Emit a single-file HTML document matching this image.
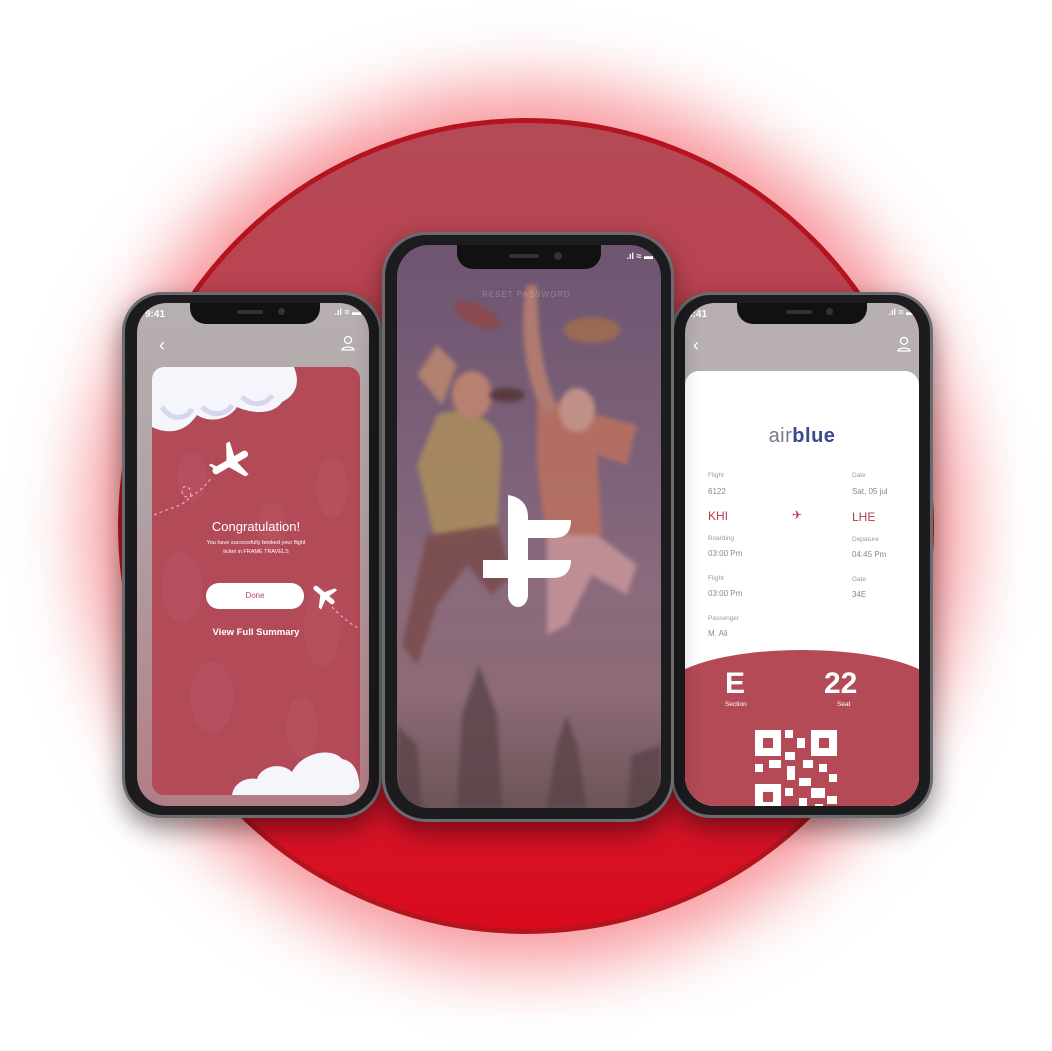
<!DOCTYPE html>
<html><head><meta charset="utf-8"><style>
*{margin:0;padding:0;box-sizing:border-box}
body{width:1052px;height:1051px;background:#fff;position:relative;overflow:hidden;font-family:"Liberation Sans",sans-serif}
.a{position:absolute}
.circle{left:118px;top:118px;width:816px;height:816px;border-radius:50%;background:linear-gradient(180deg,#b44a56 0%,#c23a4a 45%,#d4192c 80%,#d90a1e 100%);border:5px solid #b5141f;box-shadow:0 0 70px 30px rgba(240,40,50,.5)}
.phone{background:#1c1c1e;border-radius:40px;border:3px solid #6a6c70;box-shadow:0 10px 25px rgba(0,0,0,.45)}
.scr{border-radius:30px;overflow:hidden}
.notch{background:#111;border-radius:0 0 16px 16px}
.st{color:#fff;font-size:10px;font-weight:bold}
</style></head><body>
<div class="a circle"></div>

<!-- LEFT PHONE -->
<div class="a phone" style="left:122px;top:292px;width:260px;height:526px"></div>
<div class="a scr" style="left:137px;top:303px;width:232px;height:503px;background:linear-gradient(180deg,#b6afb0 0%,#b0a2a5 40%,#b27e86 100%)">
  <div class="a st" style="left:8px;top:6px">9:41</div>
  <div class="a st" style="right:8px;top:4px;font-size:9px">.ıl ≈ ▬</div>
  <div class="a" style="left:22px;top:32px;color:#fff;font-size:18px">‹</div>
  <svg class="a" style="left:203px;top:32px" width="16" height="16" viewBox="0 0 16 16"><circle cx="8" cy="5" r="3.5" fill="none" stroke="#fff" stroke-width="1.3"/><path d="M2 15c0-4 12-4 12 0z" fill="none" stroke="#fff" stroke-width="1.3"/></svg>
  <div class="a" style="left:15px;top:64px;width:208px;height:428px;border-radius:12px;background:#b24a58;overflow:hidden">
    <svg class="a" style="left:0;top:0" width="208" height="428">
      <g fill="#bb5663" opacity=".5"><ellipse cx="180" cy="120" rx="16" ry="30"/><ellipse cx="30" cy="220" rx="20" ry="35"/><ellipse cx="170" cy="260" rx="18" ry="40"/><ellipse cx="60" cy="330" rx="22" ry="35"/><ellipse cx="150" cy="360" rx="16" ry="30"/><ellipse cx="120" cy="160" rx="14" ry="25"/><ellipse cx="40" cy="110" rx="15" ry="25"/></g>
      <path d="M0 0H142C150 20 140 30 130 35C120 50 95 45 85 40C75 55 55 55 45 48C30 70 10 65 0 60Z" fill="#f5f5fc"/>
      <path d="M10 40C20 55 35 52 40 42 M50 40C60 50 75 48 80 38 M90 30C100 40 115 38 120 28" stroke="#d6d6ee" stroke-width="5" fill="none"/>
      <path d="M80 428C82 415 95 410 105 412C110 398 130 395 140 405C150 385 180 380 190 392C205 395 208 410 208 428Z" fill="#f5f5fc"/>
      <g fill="#fff" transform="translate(78,95) rotate(-30)"><rect x="-20" y="-3" width="40" height="7" rx="3.5"/><path d="M-4 0L6 -18L10 -18L6 0Z M-4 3L6 20L10 20L6 3Z M-16 0L-20 -8L-17 -8L-12 0Z"/></g>
      <path d="M2 148C20 140 30 140 38 130C42 120 30 115 30 125C32 135 45 130 60 110" stroke="#e8c0c6" stroke-width="1" stroke-dasharray="3 3" fill="none"/>
      <g fill="#fff" transform="translate(172,228) rotate(40)"><rect x="-13" y="-2.5" width="26" height="5" rx="2.5"/><path d="M-3 0L4 -12L7 -12L4 0Z M-3 2L4 13L7 13L4 2Z"/></g>
      <path d="M180 240C190 250 195 255 208 262" stroke="#e8c0c6" stroke-width="1" stroke-dasharray="3 3" fill="none"/>
    </svg>
    <div class="a" style="left:0;width:208px;top:152px;text-align:center;color:#fff;font-size:13px">Congratulation!</div>
    <div class="a" style="left:0;width:208px;top:172px;text-align:center;color:#fff;font-size:5.5px;line-height:9px">You have successfully booked your flight<br>ticket in FRAME TRAVELS</div>
    <div class="a" style="left:54px;top:216px;width:98px;height:26px;border-radius:13px;background:#fff;color:#b24a58;font-size:8px;text-align:center;line-height:26px">Done</div>
    <div class="a" style="left:0;width:208px;top:260px;text-align:center;color:#fff;font-size:9.5px;font-weight:bold">View Full Summary</div>
  </div>
  <div class="a notch" style="left:53px;top:0;width:130px;height:21px"></div>
  <div class="a" style="left:100px;top:7px;width:26px;height:4px;border-radius:2px;background:#333"></div>
  <div class="a" style="left:141px;top:5px;width:7px;height:7px;border-radius:50%;background:#333"></div>
</div>

<!-- RIGHT PHONE -->
<div class="a phone" style="left:671px;top:292px;width:262px;height:526px"></div>
<div class="a scr" style="left:685px;top:303px;width:234px;height:503px;background:#b7afb0">
  <div class="a st" style="left:2px;top:6px">9:41</div>
  <div class="a st" style="right:4px;top:4px;font-size:9px">.ıl ≈ ▬</div>
  <div class="a" style="left:8px;top:32px;color:#fff;font-size:18px">‹</div>
  <svg class="a" style="left:211px;top:33px" width="16" height="16" viewBox="0 0 16 16"><circle cx="8" cy="5" r="3.5" fill="none" stroke="#fff" stroke-width="1.3"/><path d="M2 15c0-4 12-4 12 0z" fill="none" stroke="#fff" stroke-width="1.3"/></svg>
  <div class="a" style="left:0;top:68px;width:234px;height:440px;background:#fff;border-radius:14px 14px 0 0"></div>
  <div class="a" style="left:0;top:122px;width:234px;text-align:center;font-size:20px;letter-spacing:.5px"><span style="color:#777a88">air</span><b style="color:#3b4a8c">blue</b></div>
  <div style="position:absolute;left:23px;top:169px;font-size:6.5px;color:#999">Flight</div>
  <div style="position:absolute;left:23px;top:184px;font-size:8px;color:#888">6122</div>
  <div style="position:absolute;left:167px;top:169px;font-size:6.5px;color:#999">Date</div>
  <div style="position:absolute;left:167px;top:184px;font-size:8px;color:#888">Sat, 05 jul</div>
  <div style="position:absolute;left:23px;top:206px;font-size:12px;color:#b43c4c">KHI</div>
  <div style="position:absolute;left:107px;top:205px;font-size:12px;color:#b43c4c">✈</div>
  <div style="position:absolute;left:167px;top:207px;font-size:12px;color:#b43c4c">LHE</div>
  <div style="position:absolute;left:23px;top:232px;font-size:6.5px;color:#999">Boarding</div>
  <div style="position:absolute;left:23px;top:246px;font-size:8px;color:#888">03:00 Pm</div>
  <div style="position:absolute;left:167px;top:233px;font-size:6.5px;color:#999">Depature</div>
  <div style="position:absolute;left:167px;top:247px;font-size:8px;color:#888">04:45 Pm</div>
  <div style="position:absolute;left:23px;top:272px;font-size:6.5px;color:#999">Flight</div>
  <div style="position:absolute;left:23px;top:286px;font-size:8px;color:#888">03:00 Pm</div>
  <div style="position:absolute;left:167px;top:273px;font-size:6.5px;color:#999">Gate</div>
  <div style="position:absolute;left:167px;top:287px;font-size:8px;color:#888">34E</div>
  <div style="position:absolute;left:23px;top:312px;font-size:6.5px;color:#999">Passenger</div>
  <div style="position:absolute;left:23px;top:326px;font-size:8px;color:#888">M. Ali</div>
  <div class="a" style="left:-20px;top:347px;width:274px;height:200px;border-radius:50% 50% 0 0/40px 40px 0 0;background:#b34a56"></div>
  <div class="a" style="left:40px;top:364px;color:#fff;font-size:30px;font-weight:bold">E</div>
  <div class="a" style="left:40px;top:398px;color:#fff;font-size:6.5px">Section</div>
  <div class="a" style="left:139px;top:364px;color:#fff;font-size:30px;font-weight:bold">22</div>
  <div class="a" style="left:152px;top:398px;color:#fff;font-size:6.5px">Seat</div>
  <svg class="a" style="left:70px;top:427px" width="82" height="80" viewBox="0 0 82 80"><g fill="#fff"><path d="M0 0h26v26H0zM8 8v10h10V8z" fill-rule="evenodd"/><path d="M56 0h26v26H56zM64 8v10h10V8z" fill-rule="evenodd"/><path d="M0 54h26v26H0zM8 62v10h10V62z" fill-rule="evenodd"/><rect x="30" y="0" width="8" height="8"/><rect x="42" y="8" width="8" height="10"/><rect x="30" y="22" width="10" height="8"/><rect x="0" y="34" width="8" height="8"/><rect x="14" y="30" width="12" height="8"/><rect x="32" y="36" width="8" height="14"/><rect x="48" y="30" width="10" height="8"/><rect x="64" y="34" width="8" height="8"/><rect x="74" y="44" width="8" height="8"/><rect x="44" y="48" width="12" height="8"/><rect x="30" y="58" width="8" height="8"/><rect x="56" y="58" width="14" height="10"/><rect x="44" y="68" width="8" height="12"/><rect x="72" y="66" width="10" height="8"/><rect x="60" y="74" width="8" height="6"/></g></svg>
  <div class="a notch" style="left:52px;top:0;width:130px;height:21px"></div>
  <div class="a" style="left:101px;top:7px;width:26px;height:4px;border-radius:2px;background:#333"></div>
  <div class="a" style="left:141px;top:5px;width:7px;height:7px;border-radius:50%;background:#333"></div>
</div>

<!-- CENTER PHONE -->
<div class="a phone" style="left:382px;top:232px;width:292px;height:590px;border-radius:44px"></div>
<div class="a scr" style="left:397px;top:245px;width:264px;height:563px;border-radius:32px;background:linear-gradient(180deg,#6e5570 0%,#7a6078 35%,#8a6a7c 60%,#8c6a76 80%,#6d5558 100%)">
  <svg class="a" style="left:0;top:0;filter:blur(2.5px)" width="264" height="563">
    <path d="M20 130L40 100L60 120L45 160Z" fill="#b08070"/>
    <path d="M40 170C60 160 100 170 105 200L100 290L40 300L20 220Z" fill="#a88c5e" opacity=".9"/>
    <path d="M140 150C160 160 200 170 240 180L230 220L200 210L205 290L150 300L140 220Z" fill="#b87060" opacity=".9"/>
    <path d="M30 290L100 280L115 330L95 350L70 320L40 360L20 420L5 400Z" fill="#7a4c4e" opacity=".9"/>
    <path d="M150 290L200 290L240 320L230 350L195 330L170 380L150 390Z" fill="#c8959a" opacity=".85"/>
    <path d="M115 45L210 110L200 120L110 60Z" fill="#9a6a55" opacity="0"/>
    <path d="M130 40C120 80 130 150 150 170L160 160C145 130 140 80 140 40Z" fill="#b07a70"/>
    <ellipse cx="75" cy="150" rx="20" ry="24" fill="#b88070"/>
    <ellipse cx="180" cy="165" rx="18" ry="22" fill="#c09088"/>
    <ellipse cx="80" cy="70" rx="25" ry="10" fill="#8a4a50" transform="rotate(25 80 70)"/>
    <ellipse cx="195" cy="85" rx="28" ry="13" fill="#9a6a55"/>
    <ellipse cx="110" cy="150" rx="18" ry="7" fill="#5a3a40"/>
    <path d="M60 563L65 470L82 420L100 470L105 563Z M150 563L160 500L170 470L180 500L190 563Z M0 563L0 480L20 500L25 563Z M230 563L235 510L264 500L264 563Z" fill="#5a4448" opacity=".8"/>
  </svg>
  <div class="a" style="left:85px;top:45px;color:rgba(255,255,255,.25);font-size:8px;letter-spacing:1px">RESET PASSWORD</div>
  <svg class="a" style="left:86px;top:250px" width="90" height="112" viewBox="0 0 90 112"><g fill="#fff"><path d="M25 0C38 2 45 10 45 22V100C45 106 41 112 35 112C29 112 25 106 25 100Z"/><path d="M45 25H88C88 38 82 43 70 43H45Z"/><path d="M0 65H88C88 76 82 83 70 83H0Z"/></g></svg>
  <div class="a notch" style="left:60px;top:0;width:144px;height:24px"></div>
  <div class="a" style="left:112px;top:9px;width:30px;height:4px;border-radius:2px;background:#333"></div>
  <div class="a" style="left:157px;top:7px;width:8px;height:8px;border-radius:50%;background:#333"></div>
  <div class="a st" style="right:8px;top:6px;font-size:9px">.ıl ≈ ▬</div>
</div>
</body></html>
